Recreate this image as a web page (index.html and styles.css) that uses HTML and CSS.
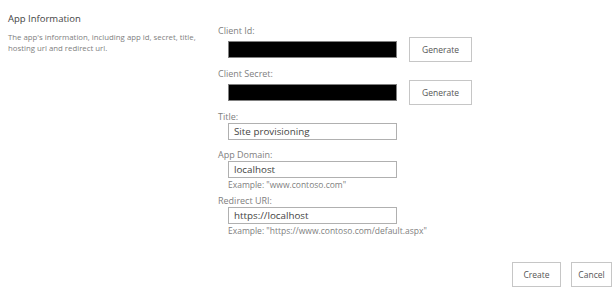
FILE: index.html
```html
<!DOCTYPE html>
<html>
<head>
<meta charset="utf-8">
<link rel="stylesheet" href="styles.css">
</head>
<body>
<div class="page">
  <div class="section">
    <div class="info">
      <div class="info-title">App Information</div>
      <div class="info-desc">The app's information, including app id, secret, title, hosting url and redirect url.</div>
    </div>
    <div class="fields">
      <div class="field field-btn">
        <div class="label">Client Id:</div>
        <div class="row">
          <div class="input redacted"></div>
          <button class="btn">Generate</button>
        </div>
      </div>
      <div class="field field-btn">
        <div class="label">Client Secret:</div>
        <div class="row">
          <div class="input redacted"></div>
          <button class="btn">Generate</button>
        </div>
      </div>
      <div class="field">
        <div class="label">Title:</div>
        <div class="row"><div class="input">Site provisioning</div></div>
      </div>
      <div class="field field-hint">
        <div class="label">App Domain:</div>
        <div class="row"><div class="input">localhost</div></div>
        <div class="hint">Example: "www.contoso.com"</div>
      </div>
      <div class="field field-hint">
        <div class="label">Redirect URI:</div>
        <div class="row"><div class="input">https://localhost</div></div>
        <div class="hint">Example: "https://www.contoso.com/default.aspx"</div>
      </div>
    </div>
  </div>
  <div class="actions">
    <button class="btn btn-create">Create</button>
    <button class="btn btn-cancel">Cancel</button>
  </div>
</div>
</body>
</html>
```
FILE: styles.css
```css
html, body {
  margin: 0;
  padding: 0;
  background: #fff;
}
body {
  font-family: "Open Sans", "Noto Sans", sans-serif;
  color: #444;
  width: 616px;
  height: 293px;
  overflow: hidden;
}
.page {
  display: flex;
  flex-direction: column;
  height: 293px;
}
.section {
  display: grid;
  grid-template-columns: 210px 1fr;
}
.info {
  padding: 12px 0 0 8px;
}
.info-title {
  font-size: 9.5px;
  color: #444;
  line-height: 14px;
}
.info-desc {
  font-size: 7.8px;
  color: #808080;
  line-height: 10.5px;
  margin-top: 6px;
  width: 200px;
}
.fields {
  padding: 24px 0 0 8px;
  display: flex;
  flex-direction: column;
}
.label {
  font-size: 9px;
  color: #808080;
  line-height: 13px;
}
.row {
  display: flex;
  align-items: center;
  padding-left: 10px;
  gap: 12px;
}
.input {
  box-sizing: border-box;
  width: 169px;
  height: 17px;
  border: 1px solid #b0b0b0;
  font-size: 9.8px;
  line-height: 15px;
  padding-left: 5px;
  color: #444;
}
.input.redacted {
  background: #000;
  border-color: #808080;
}
.btn {
  box-sizing: border-box;
  height: 25px;
  border: 1px solid #c6c6c6;
  background: #fff;
  font-family: inherit;
  font-size: 8.5px;
  color: #555;
  padding: 0 12px;
  margin: 0;
}
.field {
  margin-bottom: 8px;
}
.field-btn {
  margin-bottom: 5px;
}
.field-hint {
  margin-bottom: 4px;
}
.hint {
  font-size: 8.5px;
  color: #808080;
  padding-left: 10px;
  line-height: 10px;
  margin-top: 2px;
}
.actions {
  display: flex;
  justify-content: flex-end;
  gap: 10px;
  margin-top: auto;
  padding: 0 4px 6px 0;
}
.actions .btn {
  padding: 0;
  height: 25px;
}
.btn-create {
  width: 49px;
}
.btn-cancel {
  width: 41px;
}
```
